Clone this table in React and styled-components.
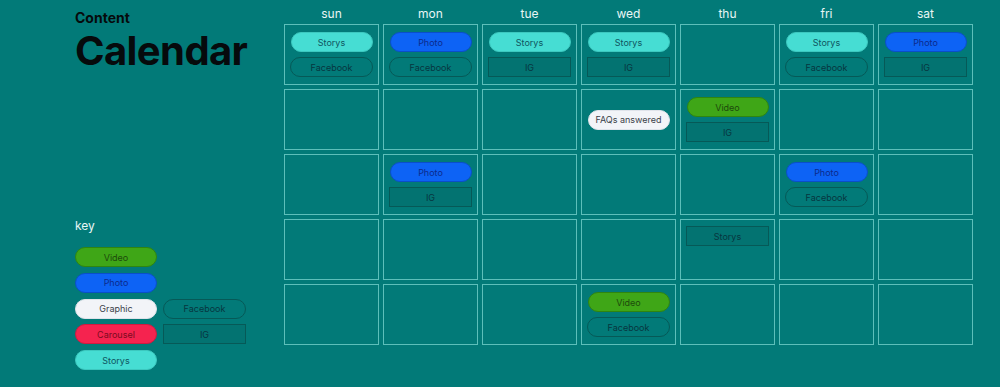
import styled, { createGlobalStyle } from "styled-components";

const GlobalStyle = createGlobalStyle`
  body {
    margin: 0;
    background-color: #027a78;
    font-family: Inter, "Noto Sans", sans-serif;
  }
`;

const colors = {
  Video: { bg: "#3fa617", fg: "#1d4a0c", border: "#2f8510" },
  Photo: { bg: "#0d63f5", fg: "#0c2a8c", border: "#0a4fc8" },
  Graphic: { bg: "#f2f4f8", fg: "#3a3f48", border: "#dfe3ea" },
  Carousel: { bg: "#f5234f", fg: "#7a0b20", border: "#d01a40" },
  Storys: { bg: "#46ddd3", fg: "#0f5560", border: "#3cc8bf" },
};

const Page = styled.div`
  display: flex;
  width: 1000px;
  height: 387px;
  padding-left: 75px;
  box-sizing: border-box;
`;

const Sidebar = styled.div`
  display: flex;
  flex-direction: column;
  width: 209px;
`;

const Kicker = styled.div`
  margin-top: 9px;
  font-size: 14px;
  font-weight: 700;
  line-height: 17px;
  color: #060a0c;
`;

const Title = styled.h1`
  margin: 0;
  font-size: 40px;
  font-weight: 700;
  line-height: 49px;
  letter-spacing: -0.6px;
  color: #060a0c;
`;

const KeyLabel = styled.div`
  margin-top: 144px;
  font-size: 12px;
  line-height: 14px;
  color: #e8f6f5;
`;

const KeyGrid = styled.div`
  display: grid;
  grid-template-columns: 82px 83px;
  grid-auto-rows: 20px;
  column-gap: 6px;
  row-gap: 5.75px;
  margin-top: 14px;
`;

const Calendar = styled.div`
  display: grid;
  grid-template-columns: repeat(7, 95px);
  grid-template-rows: 20px repeat(5, 61px);
  column-gap: 4px;
  row-gap: 4px;
`;

const DayHead = styled.div`
  align-self: end;
  margin-bottom: -1px;
  text-align: center;
  font-size: 12px;
  line-height: 14px;
  color: #e8f6f5;
`;

const Cell = styled.div`
  display: flex;
  flex-direction: column;
  align-items: center;
  justify-content: ${(props) => (props.$top ? "flex-start" : "center")};
  gap: 5px;
  padding-top: ${(props) => (props.$top ? "6px" : "0")};
  box-sizing: border-box;
  border: 1px solid #5dbfba;
`;

const Pill = styled.div`
  display: flex;
  align-items: center;
  justify-content: center;
  width: 82px;
  height: 20px;
  box-sizing: border-box;
  border-radius: 10px;
  font-size: 9px;
  background-color: ${(props) => colors[props.$kind].bg};
  color: ${(props) => colors[props.$kind].fg};
  border: 1px solid ${(props) => colors[props.$kind].border};
`;

const Outline = styled.div`
  display: flex;
  align-items: center;
  justify-content: center;
  width: 83px;
  height: 20px;
  box-sizing: border-box;
  border-radius: ${(props) => (props.$square ? "0" : "10px")};
  border: 1px solid #065957;
  background-color: ${(props) => (props.$square ? "#037371" : "transparent")};
  font-size: 9px;
  color: #073640;
`;

const days = ["sun", "mon", "tue", "wed", "thu", "fri", "sat"];

// each entry: [kind, label]; Facebook = round outline, IG/Box = square outline
const weeks = [
  [
    [["Storys"], ["Facebook"]],
    [["Photo"], ["Facebook"]],
    [["Storys"], ["IG"]],
    [["Storys"], ["IG"]],
    [],
    [["Storys"], ["Facebook"]],
    [["Photo"], ["IG"]],
  ],
  [[], [], [], [["Graphic", "FAQs answered"]], [["Video"], ["IG"]], [], []],
  [[], [["Photo"], ["IG"]], [], [], [], [["Photo"], ["Facebook"]], []],
  [[], [], [], [], [["Box", "Storys"]], [], []],
  [[], [], [], [["Video"], ["Facebook"]], [], [], []],
];

function Item({ kind, label }) {
  const text = label || kind;
  if (kind === "Facebook") return <Outline>{text}</Outline>;
  if (kind === "IG" || kind === "Box") return <Outline $square>{text}</Outline>;
  return <Pill $kind={kind}>{text}</Pill>;
}

export default function App() {
  return (
    <>
      <GlobalStyle />
      <Page>
        <Sidebar>
          <Kicker>Content</Kicker>
          <Title>Calendar</Title>
          <KeyLabel>key</KeyLabel>
          <KeyGrid>
            <Pill $kind="Video">Video</Pill>
            <span />
            <Pill $kind="Photo">Photo</Pill>
            <span />
            <Pill $kind="Graphic">Graphic</Pill>
            <Outline>Facebook</Outline>
            <Pill $kind="Carousel">Carousel</Pill>
            <Outline $square>IG</Outline>
            <Pill $kind="Storys">Storys</Pill>
          </KeyGrid>
        </Sidebar>
        <Calendar>
          {days.map((d) => (
            <DayHead key={d}>{d}</DayHead>
          ))}
          {weeks.map((week, w) =>
            week.map((items, d) => (
              <Cell key={`${w}-${d}`} $top={items.some(([k]) => k === "Box")}>
                {items.map(([kind, label], i) => (
                  <Item key={i} kind={kind} label={label} />
                ))}
              </Cell>
            ))
          )}
        </Calendar>
      </Page>
    </>
  );
}
